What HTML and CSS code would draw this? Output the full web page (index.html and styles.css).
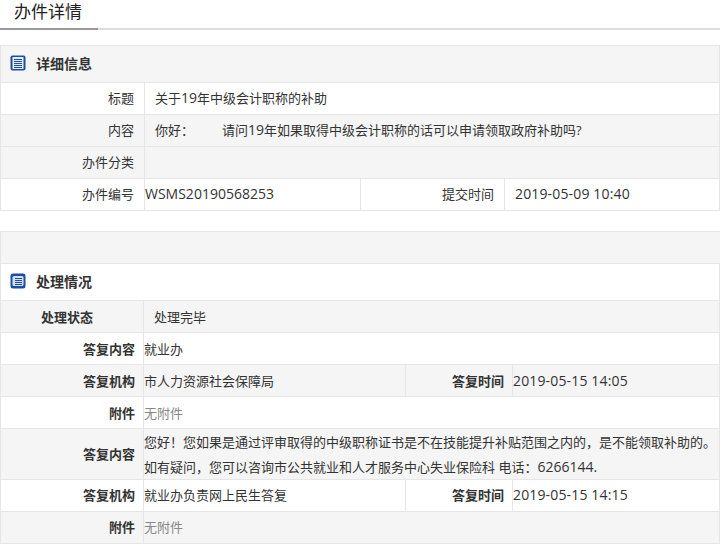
FILE: index.html
```html
<!DOCTYPE html>
<html lang="zh">
<head>
<meta charset="utf-8">
<title>办件详情</title>
<link rel="stylesheet" href="styles.css">
</head>
<body>
<div class="page">
  <div class="tabbar"><h1 class="tab">办件详情</h1></div>

  <table class="info first">
    <colgroup><col class="a1"><col class="a2"><col class="a3"><col></colgroup>
    <tr class="head shade"><td colspan="4">
      <div class="section">
        <svg class="icon" viewBox="0 0 16 16"><rect x="0.5" y="0.5" width="15" height="15" rx="2" fill="#1c4ea6"/><rect x="2.5" y="2" width="11" height="12" fill="#e4ecf8"/><path d="M4 4.5h8M4 6.5h8M4 8.5h8M4 10.5h8M4 12.5h8" stroke="#1c4ea6" stroke-width="1"/></svg>
        <span>详细信息</span>
      </div>
    </td></tr>
    <tr><th>标题</th><td colspan="3" class="pad">关于<span class="num">19</span>年中级会计职称的补助</td></tr>
    <tr class="shade"><th>内容</th><td colspan="3" class="pad"><span class="hello">你好：</span>请问<span class="num">19</span>年如果取得中级会计职称的话可以申请领取政府补助吗?</td></tr>
    <tr class="shade"><th>办件分类</th><td colspan="3"></td></tr>
    <tr><th>办件编号</th><td class="num">WSMS20190568253</td><th>提交时间</th><td class="pad num date">2019-05-09 10:40</td></tr>
  </table>

  <div class="band"></div>

  <table class="info second">
    <colgroup><col class="b1"><col class="b2"><col class="b3"><col></colgroup>
    <tr class="head"><td colspan="4">
      <div class="section">
        <svg class="icon" viewBox="0 0 16 16"><rect x="0.5" y="0.5" width="15" height="15" rx="2.5" fill="#1c4ea6"/><rect x="2.5" y="3" width="11" height="10" rx="1.5" fill="#d3dff2"/><path d="M5 5.5h7M5 7.5h7M5 9.5h7M5 11.5h7" stroke="#1c4ea6" stroke-width="1"/></svg>
        <span>处理情况</span>
      </div>
    </td></tr>
    <tr class="shade"><th class="center">处理状态</th><td colspan="3" class="pad">处理完毕</td></tr>
    <tr><th>答复内容</th><td colspan="3">就业办</td></tr>
    <tr class="shade"><th>答复机构</th><td>市人力资源社会保障局</td><th>答复时间</th><td class="num date">2019-05-15 14:05</td></tr>
    <tr><th>附件</th><td colspan="3" class="muted">无附件</td></tr>
    <tr class="shade tall"><th>答复内容</th><td colspan="3">您好！您如果是通过评审取得的中级职称证书是不在技能提升补贴范围之内的，是不能领取补助的。<br>如有疑问，您可以咨询市公共就业和人才服务中心失业保险科 电话：<span class="num">6266144.</span></td></tr>
    <tr class="low"><th>答复机构</th><td>就业办负责网上民生答复</td><th>答复时间</th><td class="num date">2019-05-15 14:15</td></tr>
    <tr class="shade low"><th>附件</th><td colspan="3" class="muted">无附件</td></tr>
  </table>
</div>
</body>
</html>
```

FILE: styles.css
```css
* { box-sizing: border-box; }
html, body { margin: 0; background: #fff; }
body {
  font-family: "Open Sans", "Noto Sans CJK SC", sans-serif;
  font-size: 13px;
  color: #333;
}
.page { width: 720px; height: 549px; overflow: hidden; }
.tabbar { height: 30px; border-bottom: 2px solid #dcdcdc; }
.tab {
  display: block;
  width: 98px;
  height: 30px;
  margin: 0;
  padding-left: 14px;
  font-size: 17px;
  font-weight: 400;
  line-height: 24px;
  color: #222;
  border-bottom: 2px solid #999;
}
.info { width: 720px; border-collapse: collapse; table-layout: fixed; }
.first { margin-top: 15px; }
.a1 { width: 144px; } .a2 { width: 216px; } .a3 { width: 144px; }
.b1 { width: 143px; } .b2 { width: 262px; } .b3 { width: 107px; }
.info td, .info th {
  border: 1px solid #e6e6e6;
  height: 32px;
  padding: 0;
  font-weight: 400;
  vertical-align: middle;
}
.info th { text-align: right; padding-right: 10px; }
.first td, .first th { padding-bottom: 2px; }
.second th { font-weight: 700; padding-right: 8px; }
.second th.center { text-align: center; padding-right: 10px; }
.pad { padding-left: 10px !important; }
.num { font-size: 14px; line-height: 1; }
.date { letter-spacing: 0.15px; }
.shade { background: #f5f5f5; }
.info tr.head td { height: 37px; padding-left: 9px; padding-bottom: 2px; }
.section { display: flex; align-items: center; gap: 10px; font-size: 14px; font-weight: 700; }
.icon { width: 16px; height: 16px; flex: none; }
.hello { display: inline-block; width: 67px; }
.muted { color: #888; }
.tall td { line-height: 24.5px; padding-top: 1px; }
.tall th { line-height: 25px; }
.info .low td, .info .low th { padding-bottom: 2px; }
.band { height: 33px; margin-top: 20px; background: #f5f5f5; border: 1px solid #e6e6e6; border-right: 0; }
.second { margin-top: -1px; }
```
